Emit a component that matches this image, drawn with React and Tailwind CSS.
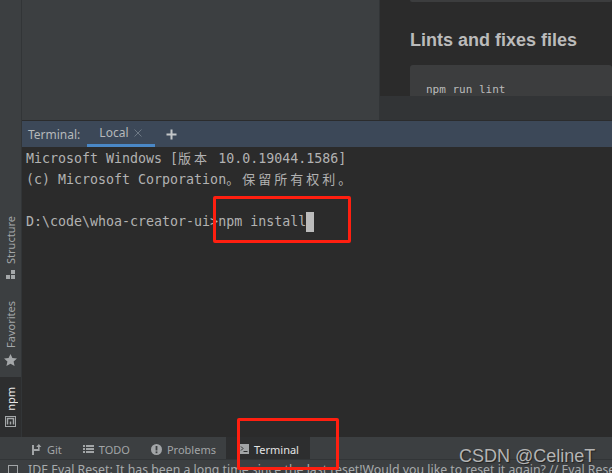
import React from 'react';

const sans = "font-['Noto_Sans','Liberation_Sans',sans-serif]";

const SideLabel = ({ label, active, icon }) => (
  <div className={`flex flex-col items-center ${active ? 'text-[#e8e8e8]' : 'text-[#a4a7a9]'}`}>
    <span className={`[writing-mode:vertical-rl] rotate-180 text-[11px] leading-[14px] ${sans}`}>{label}</span>
    <div className="mt-[6px]">{icon}</div>
  </div>
);

const BottomTab = ({ icon, label, active }) => (
  <div className={`flex h-[22px] items-center gap-[5px] pt-[2px] ${active ? 'bg-[#2d2e2f] pl-[13px] pr-[11px] text-[#e4e4e4]' : 'text-[#a2a5a7]'}`}>
    {icon}
    <span className={`text-[11px] leading-none ${sans}`}>{label}</span>
  </div>
);

export default function App() {
  return (
    <div className="relative flex h-[473px] w-[612px] flex-col overflow-hidden bg-[#3c3f41]">
      <div className="flex h-[437px]">
        {/* Left tool strip */}
        <div className="flex w-[22px] shrink-0 flex-col items-center justify-end border-r border-[#323537] bg-[#3c3f41]">
          <div className="mb-[21px]">
            <SideLabel
              label="Structure"
              icon={
                <svg width="10" height="10" viewBox="0 0 10 10" fill="#a4a7a9" className="block">
                  <rect x="5" y="0" width="4" height="4" />
                  <rect x="0" y="5" width="4" height="4" />
                  <rect x="5" y="5" width="4" height="4" />
                </svg>
              }
            />
          </div>
          <div className="mb-[11px]">
            <SideLabel
              label="Favorites"
              icon={
                <svg width="13" height="12" viewBox="0 0 13 12" fill="#a4a7a9" className="block">
                  <path d="M6.5 0l1.9 4.1 4.6.5-3.4 3 1 4.4-4.1-2.3L2.4 12l1-4.4L0 4.6l4.6-.5z" />
                </svg>
              }
            />
          </div>
          <div className="flex h-[60px] w-full flex-col items-center justify-center bg-[#2d2e2f]">
            <SideLabel
              label="npm"
              active
              icon={
                <svg width="11" height="11" viewBox="0 0 11 11" fill="none" stroke="#a4a7a9" className="block">
                  <rect x="0.5" y="0.5" width="10" height="10" />
                  <path d="M2.5 8.5v-6h6v6M5.5 8.5v-3" strokeWidth="1.5" />
                </svg>
              }
            />
          </div>
        </div>

        <div className="flex min-w-0 flex-1 flex-col">
          {/* Editor area */}
          <div className="flex h-[121px] shrink-0 border-b border-[#2b2c2d]">
            <div className="w-[358px] shrink-0 border-r border-[#323537] bg-[#3c3f41]" />
            <div className="flex min-w-0 flex-1 flex-col">
              <div className="h-[96px] overflow-hidden bg-[#2b2b2b] pl-[30px]">
                <div className="h-[2px] rounded-b-[2px] bg-[#3c3d3e]" />
                <h2 className="mt-[27px] font-['Liberation_Sans',sans-serif] text-[18px] font-bold leading-[22px] text-[#bbbbbb]">Lints and fixes files</h2>
                <div className="mt-[14px] h-[40px] rounded-t-[3px] bg-[#3c3d3e] pl-[16px] pt-[18px] font-['DejaVu_Sans_Mono',monospace] text-[11px] leading-[14px] text-[#bbbbbb]">
                  npm run lint
                </div>
              </div>
              <div className="flex-1 bg-[#323436]" />
            </div>
          </div>

          {/* Terminal header */}
          <div className="flex h-[26px] shrink-0 items-stretch bg-[#3c4858] text-[#b5b8ba]">
            <span className={`ml-[6px] flex items-center pt-[1px] text-[12px] ${sans}`}>Terminal:</span>
            <div className="ml-[7px] flex w-[68px] items-center gap-[6px] border-b-[3px] border-[#4a88c7] pl-[12px]">
              <span className={`text-[12px] ${sans}`}>Local</span>
              <svg width="8" height="8" viewBox="0 0 8 8" stroke="#6d7884" strokeWidth="1">
                <path d="M0.5 0.5l7 7M7.5 0.5l-7 7" />
              </svg>
            </div>
            <div className="ml-[11px] flex items-center">
              <svg width="11" height="11" viewBox="0 0 11 11" stroke="#c4c7c9" strokeWidth="2">
                <path d="M5.5 0.5v10M0.5 5.5h10" />
              </svg>
            </div>
          </div>

          {/* Terminal body */}
          <div className="flex-1 bg-[#2b2b2b] pl-[4px] pt-[1px] font-['DejaVu_Sans_Mono',monospace] text-[13.3px] text-[#b2b2b2]">
            <div className="h-[21px] whitespace-nowrap leading-[21px]">Microsoft Windows [<span className="font-['Noto_Sans_CJK_SC',monospace] text-[13px] leading-none tracking-[3px]">版本</span> 10.0.19044.1586]</div>
            <div className="h-[21px] whitespace-nowrap leading-[21px]">(c) Microsoft Corporation<span className="font-['Noto_Sans_CJK_SC',monospace] text-[13px] leading-none tracking-[3px]">。保留所有权利。</span></div>
            <div className="h-[21px]" />
            <div className="flex h-[21px] items-center leading-[21px]">
              <span>D:\code\whoa-creator-ui&gt;npm install</span>
              <span className="h-[20px] w-[8px] bg-[#bbbbbb]" />
            </div>
          </div>
        </div>
      </div>

      {/* Bottom tool tabs */}
      <div className="flex h-[23px] shrink-0 items-start border-b border-[#323537] bg-[#3c3f41] pl-[32px]">
        <div className="flex items-center gap-[21px]">
          <BottomTab
            label="Git"
            icon={
              <svg width="10" height="11" viewBox="0 0 10 11" fill="#a2a5a7">
                <rect x="0" y="1" width="2" height="10" />
                <rect x="0" y="5" width="6" height="2" />
                <rect x="6" y="1" width="1.6" height="6" />
                <path d="M6.8 0l2.6 3H4.2z" />
              </svg>
            }
          />
          <BottomTab
            label="TODO"
            icon={
              <svg width="11" height="10" viewBox="0 0 11 10" fill="#a2a5a7">
                <rect x="0" y="1" width="2" height="2" />
                <rect x="3" y="1" width="8" height="2" />
                <rect x="0" y="4" width="2" height="2" />
                <rect x="3" y="4" width="8" height="2" />
                <rect x="0" y="7" width="2" height="2" />
                <rect x="3" y="7" width="8" height="2" />
              </svg>
            }
          />
          <BottomTab
            label="Problems"
            icon={
              <svg width="11" height="11" viewBox="0 0 11 11">
                <circle cx="5.5" cy="5.5" r="5.5" fill="#a2a5a7" />
                <rect x="4.6" y="2" width="1.8" height="4.5" fill="#3c3f41" />
                <rect x="4.6" y="7.4" width="1.8" height="1.8" fill="#3c3f41" />
              </svg>
            }
          />
        </div>
        <div className="ml-[10px]">
          <BottomTab
            label="Terminal"
            active
            icon={
              <svg width="10" height="10" viewBox="0 0 10 10">
                <rect width="10" height="10" fill="#a2a5a7" />
                <path d="M2 2.5l2 2-2 2" fill="none" stroke="#2d2e2f" />
                <path d="M4.5 7.5h4" stroke="#2d2e2f" />
              </svg>
            }
          />
        </div>
      </div>

      {/* Status bar */}
      <div className="flex h-[13px] items-start overflow-hidden bg-[#3c3f41] pl-[8px] pt-[2px]">
        <div className="mt-[3px] h-[11px] w-[10px] shrink-0 border border-[#a2a5a7]" />
        <span className={`ml-[10px] whitespace-nowrap text-[12.3px] leading-[16px] text-[#a8abad] ${sans}`}>
          IDE Eval Reset: It has been a long time since the last reset!Would you like to reset it again? // Eval Reset
        </span>
      </div>

      {/* Red annotation boxes */}
      <div className="absolute left-[213px] top-[196px] h-[47px] w-[138px] rounded-[2px] border-[3px] border-[#ff1f10]" />
      <div className="absolute left-[237px] top-[418px] h-[52px] w-[102px] rounded-[2px] border-[3px] border-[#ff1f10]" />

      {/* Watermark */}
      <span className="absolute left-[459px] top-[445px] font-['Liberation_Sans',sans-serif] text-[18px] leading-[22px] text-[#b4b4b4] [text-shadow:1px_1px_1px_#222]">
        CSDN @CelineT
      </span>
    </div>
  );
}
